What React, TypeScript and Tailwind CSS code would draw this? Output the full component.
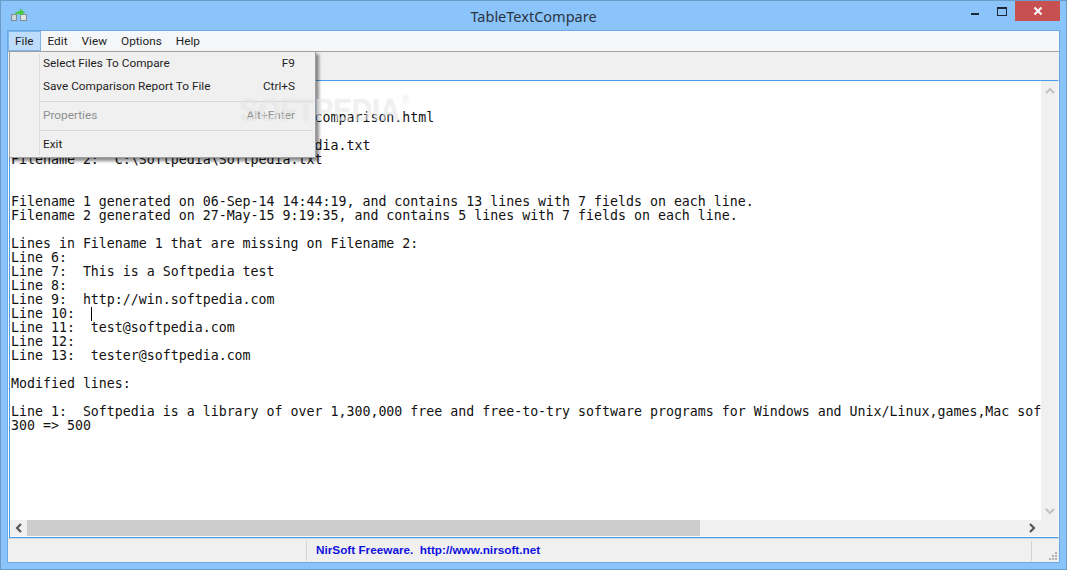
const reportLines: React.ReactNode[] = [
  "",
  "",
  "TableTextCompare Report  C:\\Softpedia\\comparison.html",
  "",
  "Filename 1:  C:\\Softpedia\\Files\\Softpedia.txt",
  "Filename 2:  C:\\Softpedia\\Softpedia.txt",
  "",
  "",
  "Filename 1 generated on 06-Sep-14 14:44:19, and contains 13 lines with 7 fields on each line.",
  "Filename 2 generated on 27-May-15 9:19:35, and contains 5 lines with 7 fields on each line.",
  "",
  "Lines in Filename 1 that are missing on Filename 2:",
  "Line 6:",
  "Line 7:  This is a Softpedia test",
  "Line 8:",
  "Line 9:  http://win.softpedia.com",
  <>
    {"Line 10:  "}
    <span className="inline-block h-[14px] w-px bg-black align-top" />
  </>,
  "Line 11:  test@softpedia.com",
  "Line 12:",
  "Line 13:  tester@softpedia.com",
  "",
  "Modified lines:",
  "",
  "Line 1:  Softpedia is a library of over 1,300,000 free and free-to-try software programs for Windows and Unix/Linux,games,Mac software",
  "300 => 500",
];

const menuBar = ["File", "Edit", "View", "Options", "Help"];

function AppIcon() {
  return (
    <svg width="16" height="14" viewBox="0 0 16 14" className="ml-[10px] mt-[1px]">
      <rect x="0.5" y="6.5" width="5" height="6" fill="#cfd6dc" stroke="#7f8b96" />
      <rect x="9.5" y="6.5" width="6" height="6" fill="#dfe4e8" stroke="#7f8b96" />
      <path d="M4 7 L4 5 Q6 3 9 3 L9 0.5 L14 4.5 L9 8 L9 6 Q6 6 4 7 Z" fill="#4cc84a" />
    </svg>
  );
}

function ScrollChevron({ dir, color }: { dir: "up" | "down" | "left" | "right"; color: string }) {
  const d = {
    up: "M1 7 L5 3 L9 7",
    down: "M1 3 L5 7 L9 3",
    left: "M7 1 L3 5 L7 9",
    right: "M3 1 L7 5 L3 9",
  }[dir];
  return (
    <svg width="10" height="10" viewBox="0 0 10 10">
      <path d={d} fill="none" stroke={color} strokeWidth="2.2" />
    </svg>
  );
}

function FileMenu() {
  return (
    <div className="absolute left-px top-[20px] z-10 h-[107px] w-[307px] border border-[#a0a0a0] bg-[#f0f0f0] shadow-[3px_3px_3px_rgba(0,0,0,0.45)]">
      <div className="absolute bottom-[2px] left-[29px] top-[2px] w-px bg-[#dcdcdc]" />
      <div className="flex h-[23px] items-center justify-between pl-[33px] pr-[20px]">
        <span>Select Files To Compare</span>
        <span>F9</span>
      </div>
      <div className="flex h-[23px] items-center justify-between pl-[33px] pr-[20px]">
        <span>Save Comparison Report To File</span>
        <span>Ctrl+S</span>
      </div>
      <div className="my-[3px] ml-[30px] mr-[2px] h-px bg-[#d7d7d7]" />
      <div className="flex h-[22px] items-center justify-between pl-[33px] pr-[20px] text-[#8f8f8f]">
        <span>Properties</span>
        <span>Alt+Enter</span>
      </div>
      <div className="my-[3px] ml-[30px] mr-[2px] h-px bg-[#d7d7d7]" />
      <div className="flex h-[22px] items-center pl-[33px]">
        <span>Exit</span>
      </div>
    </div>
  );
}

export default function App() {
  return (
    <div className="flex h-[570px] w-[1067px] flex-col overflow-hidden border border-[#6b9bc9] bg-[#8ac4fb] font-['Roboto',sans-serif] text-[11.8px] text-[#1e1e1e]">
      {/* Title bar */}
      <div className="flex h-[29px] shrink-0 items-start">
        <div className="mt-[6px] w-[100px]">
          <AppIcon />
        </div>
        <div className="mt-[5px] flex-1 text-center font-['Noto_Sans',sans-serif] text-[14.5px] leading-[20px] text-[#2c3440]">TableTextCompare</div>
        <div className="flex h-[20px] w-[100px] items-start justify-end pr-[6px]">
          <div className="mr-[18px] mt-[12px] h-[2px] w-[8px] bg-[#1c2733]" />
          <div className="mr-[8px] mt-[6px] h-[9px] w-[10px] border border-t-2 border-[#1c2733]" />
          <div className="flex h-[20px] w-[45px] shrink-0 items-center justify-center bg-[#c75050]">
            <svg width="10" height="10" viewBox="0 0 10 10">
              <path d="M1.5 1.5 L8.5 8.5 M8.5 1.5 L1.5 8.5" stroke="#fff" strokeWidth="2" />
            </svg>
          </div>
        </div>
      </div>

      {/* Client area */}
      <div className="relative mx-[6px] mb-[6px] flex min-h-0 flex-1 flex-col border border-[#6aa8e6] bg-white">
        <div className="flex h-[20px] shrink-0 items-center bg-[#f5f6f7]">
          {menuBar.map((item, i) => (
            <div
              key={item}
              className={
                i === 0
                  ? "flex h-[20px] items-center border border-[#7db6ea] bg-[#bedcfb] px-[6px] pt-px"
                  : "flex h-[20px] items-center px-[7px] pt-[2px]"
              }
            >
              {item}
            </div>
          ))}
        </div>
        <div className="h-px shrink-0 bg-[#a3a3a3]" />
        <div className="h-[28px] shrink-0 bg-[#f0f0f0]" />

        {/* Report view */}
        <div className="ml-px flex min-h-0 flex-1 flex-col border-y border-l border-r border-[#4a9ce8] border-r-white">
          <div className="flex min-h-0 flex-1">
            <div className="min-w-0 flex-1 overflow-hidden bg-white">
              <div className="whitespace-pre pl-px pt-[2px] font-['DejaVu_Sans_Mono',monospace] text-[13.28px] leading-[14px] text-[#111]">
                {reportLines.map((line, i) => (
                  <div key={i} className="h-[14px]">
                    {line}
                  </div>
                ))}
              </div>
            </div>
            <div className="flex w-[17px] shrink-0 flex-col items-center justify-between bg-[#f0f0f0] pb-[4px] pt-[5px]">
              <ScrollChevron dir="up" color="#c2c2c2" />
              <ScrollChevron dir="down" color="#c2c2c2" />
            </div>
          </div>
          <div className="flex h-[16px] shrink-0 items-center bg-[#f0f0f0]">
            <div className="flex w-[17px] justify-center">
              <ScrollChevron dir="left" color="#555" />
            </div>
            <div className="h-full w-[673px] bg-[#cdcdcd]" />
            <div className="flex flex-1 justify-end pr-[21px]">
              <ScrollChevron dir="right" color="#555" />
            </div>
          </div>
          <div className="h-px shrink-0 bg-white" />
        </div>

        {/* Status bar */}
        <div className="flex h-[24px] shrink-0 items-center border-t border-[#cfd8e0] bg-[#f0f0f0]">
          <div className="h-[20px] w-[299px] border-r border-[#d3d3d3]" />
          <div className="flex-1 whitespace-pre pb-[2px] pl-[9px] font-['Liberation_Sans',sans-serif] text-[11.75px] font-bold text-[#1010e0]">
            {"NirSoft Freeware.  http://www.nirsoft.net"}
          </div>
          <div className="relative h-[20px] w-[28px] border-l border-[#d3d3d3]">
            <svg width="10" height="10" viewBox="0 0 10 10" className="absolute bottom-0 right-[1px]">
              <path d="M7 1h2v2H7zM4 4h2v2H4zM7 4h2v2H7zM1 7h2v2H1zM4 7h2v2H4zM7 7h2v2H7z" fill="#b0b0b0" />
            </svg>
          </div>
        </div>

        <FileMenu />

        {/* Site watermark */}
        <div className="pointer-events-none absolute left-[232px] top-[63px] z-20 flex scale-y-[1.15] items-start font-['Liberation_Sans',sans-serif] text-[28px] font-bold leading-[34px] text-white/50 [text-shadow:0_0_1px_rgba(0,0,0,0.12)]">
          SOFTPEDIA
          <span className="ml-[2px] text-[9px] font-normal leading-[14px]">®</span>
        </div>
      </div>
    </div>
  );
}
